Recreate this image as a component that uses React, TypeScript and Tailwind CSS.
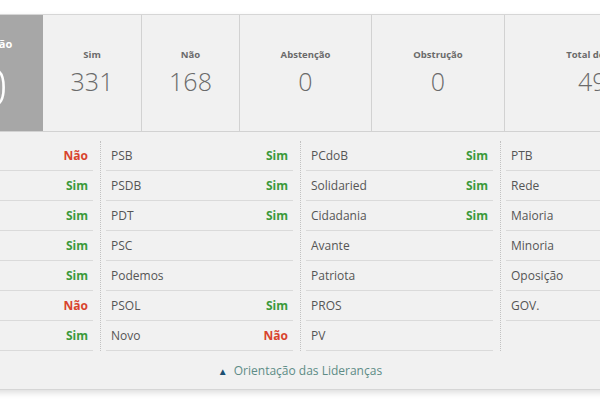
import React from 'react';

type Vote = 'Sim' | 'Não' | '';

interface Stat {
  label: string;
  value: string;
  width: string;
}

const stats: Stat[] = [
  { label: 'Sim', value: '331', width: 'w-[99px]' },
  { label: 'Não', value: '168', width: 'w-[98px]' },
  { label: 'Abstenção', value: '0', width: 'w-[132px]' },
  { label: 'Obstrução', value: '0', width: 'w-[133px]' },
  { label: 'Total de votos', value: '499', width: 'w-[190px]' },
];

const columns: [string, Vote][][] = [
  [
    ['PL', 'Não'],
    ['PT', 'Sim'],
    ['União', 'Sim'],
    ['PP', 'Sim'],
    ['MDB', 'Sim'],
    ['PSD', 'Não'],
    ['Republicanos', 'Sim'],
  ],
  [
    ['PSB', 'Sim'],
    ['PSDB', 'Sim'],
    ['PDT', 'Sim'],
    ['PSC', ''],
    ['Podemos', ''],
    ['PSOL', 'Sim'],
    ['Novo', 'Não'],
  ],
  [
    ['PCdoB', 'Sim'],
    ['Solidaried', 'Sim'],
    ['Cidadania', 'Sim'],
    ['Avante', ''],
    ['Patriota', ''],
    ['PROS', ''],
    ['PV', ''],
  ],
  [
    ['PTB', ''],
    ['Rede', ''],
    ['Maioria', ''],
    ['Minoria', ''],
    ['Oposição', ''],
    ['GOV.', ''],
  ],
];

const StatBox = ({ stat }: { stat: Stat }) => (
  <div className={`${stat.width} shrink-0 border-r border-[#d2d2d2] flex flex-col items-center pt-[33px]`}>
    <span className="text-[9.5px] font-bold text-[#6a6a6a] leading-[14px]">{stat.label}</span>
    <span className="text-[25px] font-light text-[#6a6a6a] leading-[32px] mt-[3px]">{stat.value}</span>
  </div>
);

const PartyColumn = ({ rows, first }: { rows: [string, Vote][]; first: boolean }) => (
  <div
    className={`w-[200px] shrink-0 pl-[5px] pr-[7px] ${first ? '' : 'border-l border-dotted border-[#c2c2c2]'}`}
  >
    {rows.map(([name, vote]) => (
      <div
        key={name}
        className="h-[30px] flex items-center justify-between pl-[5px] pr-[5px] border-b border-[#dadada]"
      >
        <span className="text-[12px] text-[#555]">{name}</span>
        {vote && (
          <span
            className={`text-[12px] font-bold ${vote === 'Sim' ? 'text-[#3b9a3b]' : 'text-[#d8432d]'}`}
          >
            {vote}
          </span>
        )}
      </div>
    ))}
  </div>
);

export default function App() {
  return (
    <div
      className="w-[600px] h-[417px] overflow-hidden bg-white pt-[14px]"
      style={{ fontFamily: '"Open Sans", "Noto Sans", sans-serif' }}
    >
      <div className="ml-[-101px] w-[900px] bg-[#f1f1f1] border border-[#d6d6d6] shadow-[0_3px_6px_rgba(0,0,0,0.13)]">
        {/* Totals */}
        <div className="flex h-[117px] border-b border-[#d2d2d2] pl-[37px]">
          <div className="w-[106px] shrink-0 bg-[#a7a7a7] flex flex-col items-center pt-[21px]">
            <span className="text-[11px] font-bold text-white leading-[16px]">Votação</span>
            <span className="text-[52px] font-light text-white leading-[56px] mt-[6px] ml-[6px]">0</span>
          </div>
          {stats.map((s) => (
            <StatBox key={s.label} stat={s} />
          ))}
        </div>

        {/* Orientação */}
        <div className="flex pt-[9px]">
          {columns.map((rows, i) => (
            <PartyColumn key={i} rows={rows} first={i === 0} />
          ))}
        </div>

        <div className="flex justify-center items-center h-[38px] pt-[2px] pr-[98px]">
          <span className="text-[#1d4f72] text-[10px] mr-[6px]">▲</span>
          <span className="text-[12px] text-[#5d8c86]">Orientação das Lideranças</span>
        </div>
      </div>
    </div>
  );
}
